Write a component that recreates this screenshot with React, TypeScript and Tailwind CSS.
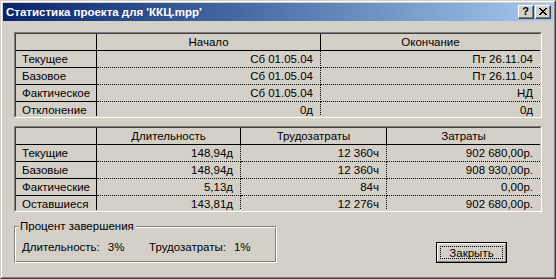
const table1 = {
  widths: ["w-[81px]", "w-[224px]", "w-[219px]"],
  headers: ["", "Начало", "Окончание"],
  rows: [
    ["Текущее", "Сб 01.05.04", "Пт 26.11.04"],
    ["Базовое", "Сб 01.05.04", "Пт 26.11.04"],
    ["Фактическое", "Сб 01.05.04", "НД"],
    ["Отклонение", "0д", "0д"],
  ],
}

const table2 = {
  widths: ["w-[81px]", "w-[144px]", "w-[146px]", "w-[153px]"],
  headers: ["", "Длительность", "Трудозатраты", "Затраты"],
  rows: [
    ["Текущие", "148,94д", "12 360ч", "902 680,00р."],
    ["Базовые", "148,94д", "12 360ч", "908 930,00р."],
    ["Фактические", "5,13д", "84ч", "0,00р."],
    ["Оставшиеся", "143,81д", "12 276ч", "902 680,00р."],
  ],
}

function StatTable({ widths, headers, rows }: { widths: string[]; headers: string[]; rows: string[][] }) {
  return (
    <div className="h-[86px] border border-t-[#808080] border-l-[#808080] border-r-white border-b-white">
      <div className="h-full border border-t-[#404040] border-l-[#404040] border-r-[#d4d0c8] border-b-[#d4d0c8] overflow-hidden">
        <div className="flex h-[17px] border-b border-black">
          {headers.map((h, i) => (
            <div
              key={i}
              className={`${widths[i]} h-full leading-[16px] text-center ${i < headers.length - 1 ? "border-r border-black" : ""}`}
            >
              {h}
            </div>
          ))}
        </div>
        {rows.map((r, ri) => (
          <div key={ri} className="flex h-[17px]">
            {r.map((c, ci) =>
              ci === 0 ? (
                <div key={ci} className={`${widths[ci]} h-full leading-[16px] pl-[6px] border-r border-b border-black`}>
                  {c}
                </div>
              ) : (
                <div
                  key={ci}
                  className={`${widths[ci]} h-full leading-[16px] text-right pr-[7px] border-b border-dotted border-black ${ci < r.length - 1 ? "border-r" : ""}`}
                >
                  {c}
                </div>
              )
            )}
          </div>
        ))}
      </div>
    </div>
  )
}

function CaptionButton({ children }: { children: React.ReactNode }) {
  return (
    <div className="w-[16px] h-[14px] border border-t-white border-l-white border-r-[#404040] border-b-[#404040] bg-[#d4d0c8]">
      <div className="h-full border-r border-b border-[#808080] flex items-center justify-center">{children}</div>
    </div>
  )
}

export default function App() {
  return (
    <div className="w-[556px] h-[279px] border border-t-[#d4d0c8] border-l-[#d4d0c8] border-r-[#404040] border-b-[#404040] font-['Liberation_Sans',sans-serif] text-[11.5px] text-black select-none">
      <div className="h-full border border-t-white border-l-white border-r-[#808080] border-b-[#808080] bg-[#d4d0c8] p-px flex flex-col">
        <div className="h-[18px] flex items-center bg-gradient-to-r from-[#0a246a] to-[#a6caf0] pl-[3px] pr-[2px]">
          <span className="text-white font-bold text-[11.5px] leading-[18px] flex-1">
            Статистика проекта для 'ККЦ.mpp'
          </span>
          <div className="flex gap-[1px]">
            <CaptionButton>
              <span className="font-bold text-[11px] leading-[12px] -mt-[1px]">?</span>
            </CaptionButton>
            <CaptionButton>
              <svg width="8" height="7" viewBox="0 0 8 7" shapeRendering="crispEdges">
                <path
                  d="M0 0h2v1H0zM6 0h2v1H6zM1 1h2v1H1zM5 1h2v1H5zM2 2h4v1H2zM3 3h2v1H3zM2 4h4v1H2zM1 5h2v1H1zM5 5h2v1H5zM0 6h2v1H0zM6 6h2v1H6z"
                  fill="#000"
                />
              </svg>
            </CaptionButton>
          </div>
        </div>

        <div className="px-[11px] pt-[11px] flex flex-col">
          <StatTable {...table1} />
          <div className="mt-[8px]">
            <StatTable {...table2} />
          </div>

          <div className="mt-[14px] flex items-end justify-between">
            <div className="relative w-[263px] h-[37px] border border-t-[#808080] border-l-[#808080] border-r-white border-b-white">
              <div className="h-full border border-t-white border-l-white border-r-[#808080] border-b-[#808080] pl-[6px] pt-[12px] flex leading-[14px]">
                <div className="w-[127px] flex gap-[8px]">
                  <span>Длительность:</span>
                  <span>3%</span>
                </div>
                <div className="flex gap-[8px]">
                  <span>Трудозатраты:</span>
                  <span>1%</span>
                </div>
              </div>
              <span className="absolute left-[3px] -top-[7px] px-[2px] bg-[#d4d0c8] leading-[13px]">Процент завершения</span>
            </div>

            <div className="mr-[35px] w-[71px] h-[21px] border border-black">
              <div className="h-full border border-t-white border-l-white border-r-[#808080] border-b-[#808080] p-[2px]">
                <div className="h-full border border-dotted border-black flex items-center justify-center leading-[13px] pt-px">
                  Закрыть
                </div>
              </div>
            </div>
          </div>
        </div>
      </div>
    </div>
  )
}
